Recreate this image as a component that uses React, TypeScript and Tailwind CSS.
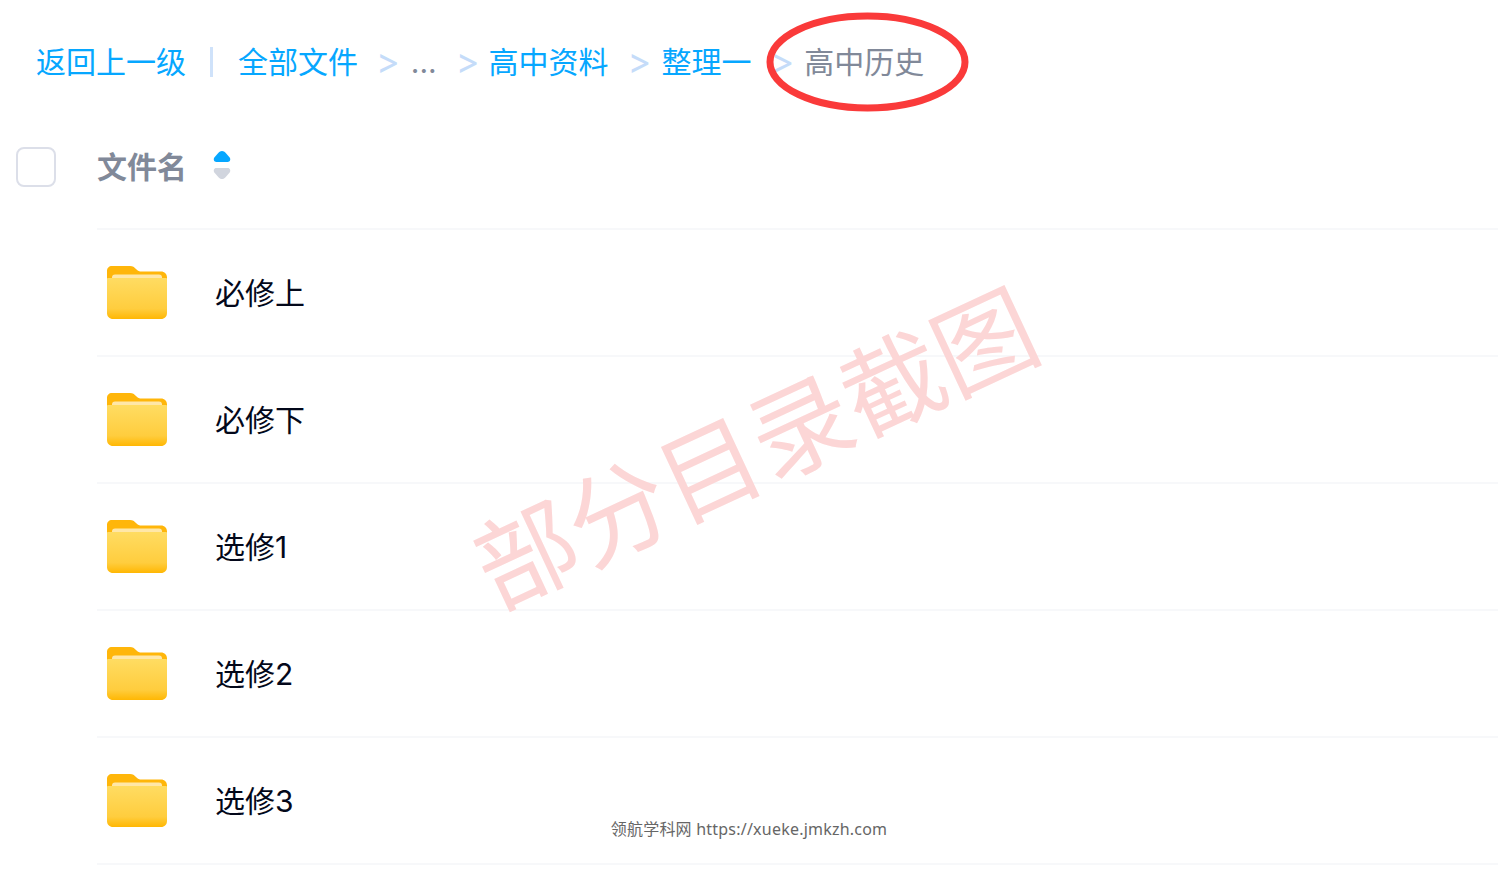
const ROWS = ['必修上', '必修下', '选修1', '选修2', '选修3'];

function FolderIcon() {
  return (
    <svg width="60" height="53" viewBox="0 0 60 53" className="shrink-0">
      <defs>
        <linearGradient id="folderFront" x1="0" y1="0" x2="0" y2="1">
          <stop offset="0" stopColor="#ffdc62" />
          <stop offset="0.75" stopColor="#ffcd3e" />
          <stop offset="1" stopColor="#ffb703" />
        </linearGradient>
      </defs>
      <path
        d="M5 0h18c3 0 4 1 6 3s3 2.500 6 2.500h19c3.500 0 6 2.500 6 6V24H0V5c0-3 2-5 5-5z"
        fill="#ffb60a"
      />
      <rect x="5" y="8.500" width="50" height="12" rx="3" fill="#ffe7a8" />
      <path
        d="M0 13c0-.5 .5-1 1-1h58c.5 0 1 .5 1 1V47c0 3.500-2.500 6-6 6H6c-3.500 0-6-2.500-6-6z"
        fill="url(#folderFront)"
      />
    </svg>
  );
}

function Sep() {
  return <span className="text-[36px] leading-[30px] text-[#c5dcf9]">&gt;</span>;
}

export default function App() {
  return (
    <div className="relative h-[871px] w-[1498px] overflow-hidden bg-white font-['Inter','Noto_Sans_CJK_SC',sans-serif]">
      <nav className="flex h-[124px] items-center pb-[1px] pl-9 text-[30px] leading-none">
        <a className="text-[#06a7ff]">返回上一级</a>
        <span className="mr-[25px] ml-[24px] h-[30px] w-[3px] bg-[#cfe2fa]" />
        <a className="text-[#06a7ff]">全部文件</a>
        <span className="ml-[18px]"><Sep /></span>
        <span className="ml-[11px] text-[#818999]">...</span>
        <span className="ml-[19px]"><Sep /></span>
        <a className="ml-[9px] text-[#06a7ff]">高中资料</a>
        <span className="ml-[19px]"><Sep /></span>
        <a className="ml-[10px] text-[#06a7ff]">整理一</a>
        <span className="ml-[19px]"><Sep /></span>
        <span className="ml-[10px] text-[#818999]">高中历史</span>
      </nav>

      <div className="flex h-[104px] items-start pt-[23px] pl-4">
        <span className="h-10 w-10 rounded-[8px] border-2 border-[#dcdfe9] bg-white" />
        <span className="mt-[4px] ml-[41px] text-[30px] leading-[32px] font-bold text-[#818999]">文件名</span>
        <svg width="18" height="30" viewBox="0 0 18 30" className="mt-[3px] ml-[26px]">
          <path d="M9 1c1.500 0 2.500.7 3.500 1.800l4 4.500C18 9.200 17.200 12 14.600 12H3.400C.800 12 0 9.200 1.500 7.300l4-4.500C6.500 1.700 7.500 1 9 1z" fill="#06a7ff" />
          <path d="M9 29c1.500 0 2.500-.7 3.500-1.800l4-4.500c1.500-1.900.7-4.700-1.900-4.700H3.400C.800 18 0 20.800 1.500 22.700l4 4.500C6.500 28.300 7.500 29 9 29z" fill="#d1d5de" />
        </svg>
      </div>

      <ul className="ml-[97px] border-t-2 border-[#f7f8fa]">
        {ROWS.map((name) => (
          <li key={name} className="flex h-[127px] items-center border-b-2 border-[#f7f8fa] pl-[10px]">
            <FolderIcon />
            <span className="ml-[48px] text-[30px] leading-none text-[#03081a]">{name}</span>
          </li>
        ))}
      </ul>

      <svg width="210" height="104" viewBox="0 0 210 104" className="absolute top-[10px] left-[763px]">
        <ellipse cx="104.500" cy="52" rx="97.500" ry="46" fill="none" stroke="#fa3a3a" strokeWidth="7" />
      </svg>

      <div className="pointer-events-none absolute top-[390px] left-[453px] w-[600px] -rotate-[25deg] text-center text-[101px] leading-[120px] whitespace-nowrap text-[#fcd6d6]">
        部分目录截图
      </div>

      <div className="absolute top-[818px] left-0 w-full text-center font-['Noto_Sans','Noto_Sans_CJK_SC',sans-serif] text-[16px] leading-[22px] tracking-[0.22px] text-[#666666]">
        领航学科网 https://xueke.jmkzh.com
      </div>
    </div>
  );
}
